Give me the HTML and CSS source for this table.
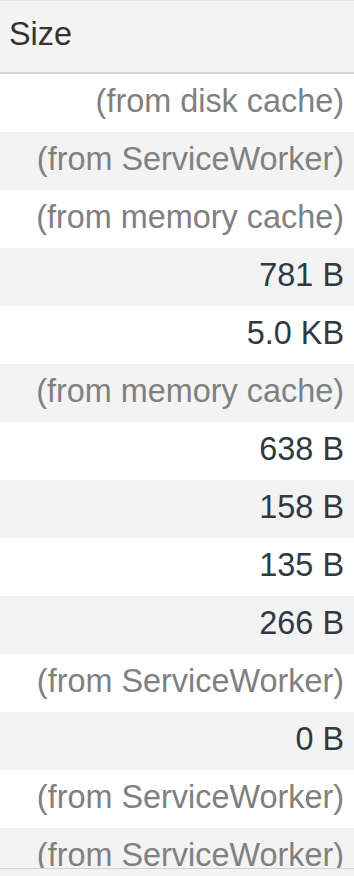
FILE: index.html
```html
<!DOCTYPE html>
<html>
<head>
<meta charset="utf-8">
<link rel="stylesheet" href="styles.css">
</head>
<body>
<div class="panel">
  <div class="header">Size</div>
  <div class="rows">
    <div class="row muted">(from disk cache)</div>
    <div class="row muted">(from ServiceWorker)</div>
    <div class="row muted">(from memory cache)</div>
    <div class="row">781 B</div>
    <div class="row">5.0 KB</div>
    <div class="row muted">(from memory cache)</div>
    <div class="row">638 B</div>
    <div class="row">158 B</div>
    <div class="row">135 B</div>
    <div class="row">266 B</div>
    <div class="row muted">(from ServiceWorker)</div>
    <div class="row">0 B</div>
    <div class="row muted">(from ServiceWorker)</div>
    <div class="row muted">(from ServiceWorker)</div>
  </div>
  <div class="footer"></div>
</div>
</body>
</html>
```
FILE: styles.css
```css
html, body {
  margin: 0;
  padding: 0;
  background: #ffffff;
}
.panel {
  width: 354px;
  height: 876px;
  display: flex;
  flex-direction: column;
  overflow: hidden;
  font-family: "Liberation Sans", Arial, Helvetica, sans-serif;
  font-size: 32.4px;
}
.header {
  flex: none;
  box-sizing: border-box;
  height: 74px;
  border-top: 1px solid #e2e2e2;
  border-bottom: 2px solid #d4d4d4;
  background: #f3f3f3;
  color: #333333;
  padding-left: 9px;
  padding-bottom: 5px;
  display: flex;
  align-items: center;
}
.rows {
  flex: 1;
  overflow: hidden;
}
.row {
  height: 54px;
  line-height: 54px;
  padding-bottom: 4px;
  text-align: right;
  padding-right: 10px;
  color: #303942;
  white-space: nowrap;
}
.row:nth-child(even) {
  background: #f3f3f3;
}
.row.muted {
  color: #808080;
}
.footer {
  flex: none;
  height: 7px;
  border-top: 1px solid #cfcfcf;
  background: #f3f3f3;
}
```
